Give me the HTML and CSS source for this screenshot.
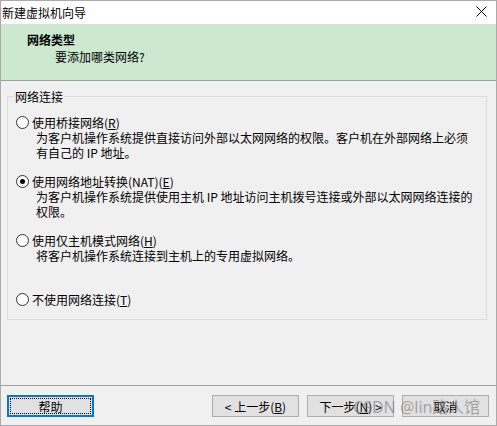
FILE: index.html
```html
<!DOCTYPE html>
<html lang="zh-CN">
<head>
<meta charset="utf-8">
<title>新建虚拟机向导</title>
<link rel="stylesheet" href="styles.css">
</head>
<body>
<div class="window">
  <div class="titlebar">
    <span class="title">新建虚拟机向导</span>
    <svg class="close" width="11" height="11" viewBox="0 0 11 11"><path d="M0.5 0.5 L10.5 10.5 M10.5 0.5 L0.5 10.5" stroke="#000" stroke-width="1" fill="none"/></svg>
  </div>
  <div class="header">
    <div class="h-title">网络类型</div>
    <div class="h-sub">要添加哪类网络?</div>
  </div>
  <div class="content">
    <fieldset class="group">
      <legend class="legend">网络连接</legend>
      <div class="options">
        <div class="option">
          <div class="opt-row"><span class="radio"></span><span class="opt-label">使用桥接网络(<u>R</u>)</span></div>
          <div class="desc">为客户机操作系统提供直接访问外部以太网网络的权限。客户机在外部网络上必须<br>有自己的 IP 地址。</div>
        </div>
        <div class="option">
          <div class="opt-row"><span class="radio checked"></span><span class="opt-label">使用网络地址转换(NAT)(<u>E</u>)</span></div>
          <div class="desc">为客户机操作系统提供使用主机 IP 地址访问主机拨号连接或外部以太网网络连接的<br>权限。</div>
        </div>
        <div class="option">
          <div class="opt-row"><span class="radio"></span><span class="opt-label">使用仅主机模式网络(<u>H</u>)</span></div>
          <div class="desc">将客户机操作系统连接到主机上的专用虚拟网络。</div>
        </div>
        <div class="option">
          <div class="opt-row"><span class="radio"></span><span class="opt-label">不使用网络连接(<u>T</u>)</span></div>
        </div>
      </div>
    </fieldset>
  </div>
  <div class="footer">
    <div class="btn focused"><span class="focus-ring">帮助</span></div>
    <div class="spacer"></div>
    <div class="btn">&lt; 上一步(<u>B</u>)</div>
    <div class="btn">下一步(<u>N</u>) &gt;</div>
    <div class="btn">取消</div>
    <div class="watermark">CSDN @lin路人馆</div>
  </div>
</div>
</body>
</html>
```
FILE: styles.css
```css
html, body {
  margin: 0;
  padding: 0;
  background: #f0f0f0;
}
body {
  font-family: "Noto Sans CJK SC", "Microsoft YaHei", sans-serif;
  font-size: 12px;
  color: #000;
}
.window {
  width: 497px;
  height: 426px;
  box-sizing: border-box;
  border: 1px solid #aaaaaa;
  display: flex;
  flex-direction: column;
  background: #f0f0f0;
  position: relative;
}
.titlebar {
  height: 23px;
  background: #ffffff;
  display: flex;
  align-items: center;
  padding-left: 1px;
  padding-right: 9px;
  flex-shrink: 0;
}
.title {
  flex: 1;
  line-height: 15px;
}
.close {
  align-self: flex-start;
  margin-top: 5px;
}
.header {
  background: #cce8cf;
  border-bottom: 1px solid #a0a0a0;
  padding-top: 8px;
  box-sizing: content-box;
  flex-shrink: 0;
  height: 48px;
}
.h-title {
  font-weight: bold;
  line-height: 15px;
  padding-left: 26px;
}
.h-sub {
  line-height: 15px;
  padding-left: 54px;
  margin-top: 2px;
}
.content {
  flex: 1;
  padding: 8px 9px 0 6px;
}
.group {
  margin: 0;
  padding: 0 0 12px 0;
  border: 1px solid #dcdcdc;
  min-width: 0;
}
.legend {
  margin-left: 6px;
  padding: 0 1px;
  line-height: 15px;
  font-size: 12px;
}
.options {
  padding: 11px 0 0 8px;
  display: flex;
  flex-direction: column;
  gap: 14px;
}
.opt-row {
  display: flex;
  align-items: center;
  height: 15px;
}
.radio {
  width: 11px;
  height: 11px;
  border: 1px solid #333333;
  border-radius: 50%;
  background: #ffffff;
  position: relative;
  flex-shrink: 0;
}
.radio.checked::after {
  content: "";
  position: absolute;
  left: 3px;
  top: 3px;
  width: 5px;
  height: 5px;
  border-radius: 50%;
  background: #000000;
}
.opt-label {
  margin-left: 3px;
  line-height: 15px;
}
.desc {
  padding-left: 20px;
  line-height: 15px;
  min-height: 30px;
}
u {
  text-decoration: underline;
  text-underline-offset: 1px;
}
.footer {
  border-top: 1px solid #a0a0a0;
  padding: 9px 7px 8px 6px;
  display: flex;
  gap: 8px;
  flex-shrink: 0;
  position: relative;
}
.spacer {
  flex: 1;
}
.btn {
  width: 87px;
  height: 22px;
  box-sizing: border-box;
  border: 1px solid #adadad;
  background: #e1e1e1;
  display: flex;
  align-items: center;
  justify-content: center;
  line-height: 15px;
}
.btn.focused {
  border: 2px solid #0078d7;
  padding: 1px;
}
.focus-ring {
  flex: 1;
  align-self: stretch;
  border: 1px dotted #000000;
  display: flex;
  align-items: center;
  justify-content: center;
}
.watermark {
  position: absolute;
  left: 352px;
  top: 12px;
  font-family: "Noto Sans", "Liberation Sans", sans-serif;
  font-size: 16px;
  line-height: 19px;
  color: rgba(120, 120, 120, 0.6);
  white-space: nowrap;
  pointer-events: none;
}
```
